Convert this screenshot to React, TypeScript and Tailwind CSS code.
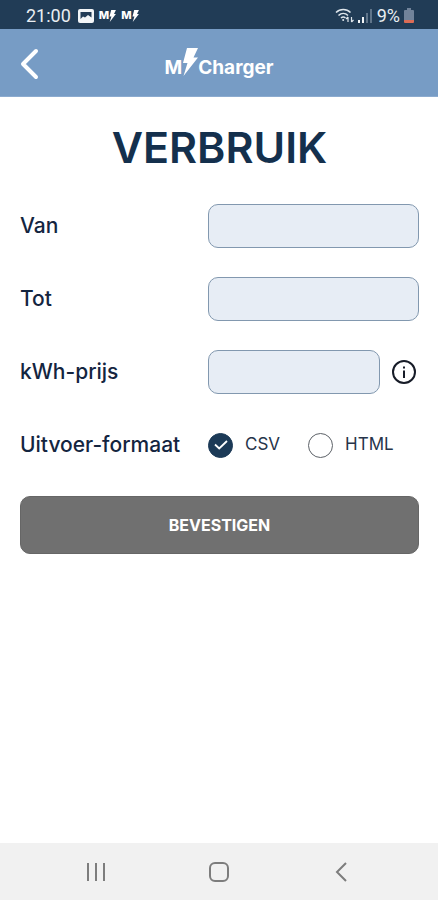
import React, { useState } from 'react';

const fieldClass =
  'h-11 w-full min-w-0 rounded-[10px] border border-[#8298af] bg-[#e7edf5] px-3 text-base text-[#14304d] outline-none focus:border-[#1c3a57]';

const labelClass = 'text-[21px] font-medium text-[#14253f] whitespace-nowrap';

const formats = [
  { value: 'csv', label: 'CSV' },
  { value: 'html', label: 'HTML' },
];

function Bolt({ className }: { className: string }) {
  return (
    <svg viewBox="0 0 16 28" className={className} fill="currentColor" aria-hidden="true">
      <path d="M5 0h11l-4.500 9.500H16L1.500 28 5.500 15H1z" />
    </svg>
  );
}

function AppBadge() {
  return (
    <span className="flex items-center text-[11px] font-extrabold">
      M
      <Bolt className="h-3 w-[7px]" />
    </span>
  );
}

function StatusBar() {
  return (
    <div className="flex h-[29px] items-center justify-between bg-[#213c56] pt-[2px] pr-6 pl-[26px] text-white">
      <div className="flex items-center gap-[5px]">
        <span className="font-[Roboto,sans-serif] text-lg text-[#e9eef2]">21:00</span>
        <svg viewBox="0 0 16 14" className="ml-[2px] h-[14px] w-4" aria-hidden="true">
          <rect width="16" height="14" rx="2" fill="#f2f5f7" />
          <path d="M2.500 3h11v5.500L10 6 7 8.500 5 7.500 2.500 10z" fill="#213c56" />
        </svg>
        <AppBadge />
        <AppBadge />
      </div>
      <div className="flex items-center gap-1">
        <svg viewBox="0 0 19 15" className="h-[15px] w-[19px]" fill="none" stroke="#dfe6ec" strokeWidth="1.500" aria-hidden="true">
          <path d="M1 4.500C5 .5 11.500.5 15.500 4.500M3.500 7.500c2.800-2.700 6.700-2.700 9.500 0M6 10c1.300-1.200 3.200-1.200 4.500 0" />
          <circle cx="8.200" cy="12" r="1" fill="#dfe6ec" stroke="none" />
          <path d="M13 14V9m-2 2 2-2M16.500 9v5m2-2-2 2" strokeWidth="1.200" />
        </svg>
        <svg viewBox="0 0 14 14" className="h-[14px] w-[14px]" aria-hidden="true">
          <path d="M0 11h2v3H0zM4 8h2v6H4z" fill="#f2f5f7" />
          <path d="M8 4h2v10H8zM12 0h2v14h-2z" fill="#60758a" />
        </svg>
        <span className="ml-px font-[Roboto,sans-serif] text-lg text-[#e9eef2]">9%</span>
        <svg viewBox="0 0 10 15" className="h-[15px] w-[10px]" aria-hidden="true">
          <path d="M3 0h4v2h2a1 1 0 0 1 1 1v9H0V3a1 1 0 0 1 1-1h2z" fill="#71839a" />
          <path d="M0 12h10v2a1 1 0 0 1-1 1H1a1 1 0 0 1-1-1z" fill="#db6c56" />
        </svg>
      </div>
    </div>
  );
}

function Header() {
  return (
    <header className="grid h-[68px] grid-cols-[1fr_auto_1fr] items-center border-b border-[#8cabcf] bg-[#779cc5] px-5 pt-[2px] text-white">
      <button type="button" aria-label="Terug" className="justify-self-start">
        <svg viewBox="0 0 20 32" className="h-8 w-5" fill="none" stroke="currentColor" strokeWidth="4" strokeLinecap="round" strokeLinejoin="round" aria-hidden="true">
          <path d="M16 3 3 16l13 13" />
        </svg>
      </button>
      <div className="flex items-end text-[19px] leading-6 font-bold">
        <span>M</span>
        <Bolt className="mb-1 h-7 w-4" />
        <span>Charger</span>
      </div>
    </header>
  );
}

function SystemNav() {
  return (
    <nav className="grid h-[57px] grid-cols-3 items-center bg-[#f1f1f1] px-[35px] text-[#7d7d7d]">
      <button type="button" aria-label="Recente apps" className="justify-self-center">
        <svg viewBox="0 0 20 20" className="size-5" fill="none" stroke="currentColor" strokeWidth="2" aria-hidden="true">
          <path d="M2 1v18M10 1v18M18 1v18" />
        </svg>
      </button>
      <button type="button" aria-label="Startscherm" className="justify-self-center">
        <svg viewBox="0 0 20 20" className="size-5" fill="none" stroke="currentColor" strokeWidth="2" aria-hidden="true">
          <rect x="1" y="1" width="18" height="18" rx="5" />
        </svg>
      </button>
      <button type="button" aria-label="Vorige" className="justify-self-center">
        <svg viewBox="0 0 20 20" className="size-5" fill="none" stroke="currentColor" strokeWidth="2" aria-hidden="true">
          <path d="m14 1-9 9 9 9" />
        </svg>
      </button>
    </nav>
  );
}

export default function App() {
  const [format, setFormat] = useState('csv');

  return (
    <div className="flex min-h-screen flex-col bg-white font-[Inter,sans-serif]">
      <StatusBar />
      <Header />

      <main className="flex-1 pt-5 pr-[19px] pl-5">
        <h1 className="text-center text-[43px] leading-[60px] font-semibold text-[#14304d]">VERBRUIK</h1>

        <form className="mt-[27px]" onSubmit={(e) => e.preventDefault()}>
          <div className="grid grid-cols-[188px_1fr] items-center gap-y-[29px]">
            <label htmlFor="from" className={labelClass}>Van</label>
            <input id="from" type="text" className={fieldClass} />

            <label htmlFor="to" className={labelClass}>Tot</label>
            <input id="to" type="text" className={fieldClass} />

            <label htmlFor="price" className={labelClass}>kWh-prijs</label>
            <div className="flex items-center gap-3">
              <input id="price" type="text" inputMode="decimal" className={fieldClass} />
              <button type="button" aria-label="Info" className="mr-[3px] shrink-0 text-[#171c28]">
                <svg viewBox="0 0 24 24" className="size-6" fill="none" stroke="currentColor" strokeWidth="2" aria-hidden="true">
                  <circle cx="12" cy="12" r="11" />
                  <path d="M12 10.500V18M12 6.500v2" />
                </svg>
              </button>
            </div>

            <span id="format-label" className={labelClass}>Uitvoer-formaat</span>
            <div role="radiogroup" aria-labelledby="format-label" className="flex h-11 items-center gap-7">
              {formats.map((f) => (
                <label key={f.value} className="flex items-center gap-3 text-[17px] text-[#26344a]">
                  <span className="grid size-[25px] place-items-center">
                    <input
                      type="radio"
                      name="format"
                      value={f.value}
                      checked={format === f.value}
                      onChange={() => setFormat(f.value)}
                      className="peer col-start-1 row-start-1 size-[25px] appearance-none rounded-full border border-[#5d6268] bg-white checked:border-[#1c3a57] checked:bg-[#1c3a57]"
                    />
                    <svg viewBox="0 0 14 10" className="pointer-events-none invisible col-start-1 row-start-1 h-[10px] w-[14px] peer-checked:visible" fill="none" stroke="#ffffff" strokeWidth="1.800" aria-hidden="true">
                      <path d="m1 4.500 4.200 4L13 1" />
                    </svg>
                  </span>
                  {f.label}
                </label>
              ))}
            </div>
          </div>

          <button type="submit" className="mt-[29px] h-[58px] w-full rounded-[10px] border border-[#666666] bg-[#707070] text-base font-bold text-white">
            BEVESTIGEN
          </button>
        </form>
      </main>

      <SystemNav />
    </div>
  );
}
